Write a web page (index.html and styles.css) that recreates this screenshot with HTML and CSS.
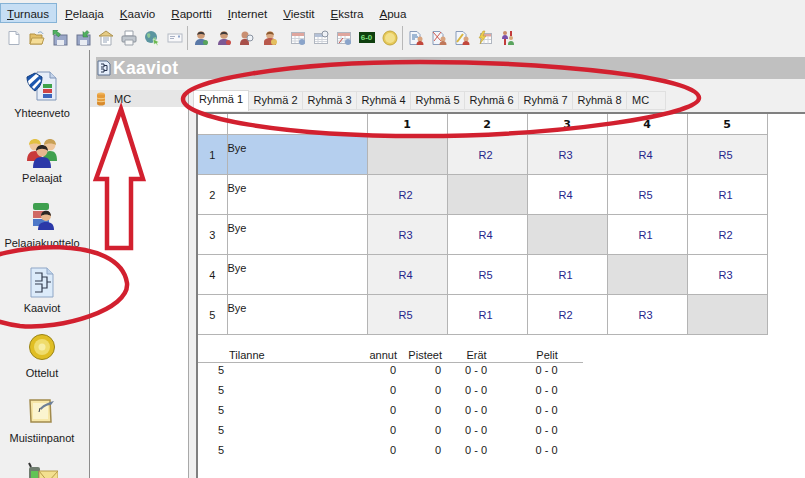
FILE: index.html
```html
<!DOCTYPE html>
<html lang="fi">
<head>
<meta charset="utf-8">
<title>Kaaviot</title>
<link rel="stylesheet" href="styles.css">
</head>
<body>
<svg class="defs" width="0" height="0" aria-hidden="true">
  <defs>
    <symbol id="i-page" viewBox="0 0 16 16"><path d="M3 1.500h7l3 3v10H3z" fill="#fff" stroke="#a9b2c0"/><path d="M10 1.500v3h3" fill="#e4e9f1" stroke="#a9b2c0"/></symbol>
    <symbol id="i-open" viewBox="0 0 16 16"><path d="M1 4h5l1 1h6v9H1z" fill="#e2bf68" stroke="#b39244"/><path d="M3 8h12l-2 6H1z" fill="#f5dd97" stroke="#b89a4e"/><path d="M9 3c2-2 4-1 5 1" fill="none" stroke="#7ea4c8"/></symbol>
    <symbol id="i-savein" viewBox="0 0 16 16"><rect x="2" y="5" width="13" height="10" fill="#9aa7c8" stroke="#6a7590"/><rect x="5" y="10" width="7" height="5" fill="#e9ecf2"/><path d="M1 0h5L4.800 1.500 8.500 4 6.500 7 3 3.500 1 5z" fill="#4fb060" stroke="#2d7a3f" stroke-width=".5"/></symbol>
    <symbol id="i-saveout" viewBox="0 0 16 16"><rect x="2" y="5" width="13" height="10" fill="#9aa7c8" stroke="#6a7590"/><rect x="5" y="10" width="7" height="5" fill="#e9ecf2"/><path d="M8 7V1.500l1.500 1.500L12 .500l2 2-2.500 2.500L13 7z" fill="#4fb060" stroke="#2d7a3f" stroke-width=".5"/></symbol>
    <symbol id="i-props" viewBox="0 0 16 16"><path d="M3 5h10v10H3z" fill="#fff" stroke="#a5acb6"/><path d="M1 6l7-5 7 5z" fill="#e5cb84" stroke="#ad9350"/><path d="M5 8h6M5 10h6M5 12h4" stroke="#96a4b8"/></symbol>
    <symbol id="i-print" viewBox="0 0 16 16"><path d="M4 1h8v5H4z" fill="#fff" stroke="#9aa1aa"/><rect x="1" y="6" width="14" height="6" rx="1" fill="#c1c7ce" stroke="#8a919a"/><path d="M4 10h8v5H4z" fill="#f6f6f6" stroke="#9aa1aa"/></symbol>
    <symbol id="i-web" viewBox="0 0 16 16"><circle cx="7" cy="7" r="6" fill="#5b95a0"/><path d="M3 4c3-2 4 1 3 3S3 8 3 4zM9 8l3-1 0 3-3 2z" fill="#8cc896"/><path d="M9 9l6 3-2 1 1 2-1 .5-1-2-2 1z" fill="#6bb84f" stroke="#fff" stroke-width=".5"/></symbol>
    <symbol id="i-mail" viewBox="0 0 16 16"><rect x="1" y="4" width="14" height="8" fill="#f8f8fa" stroke="#b4bac4"/><path d="M3 6.500h5M3 8.500h4" stroke="#a9b1c4"/><rect x="11" y="5.500" width="2" height="2" fill="#8fa6cc"/></symbol>
    <symbol id="i-person" viewBox="0 0 16 16"><circle cx="8" cy="5" r="3.800" fill="#cf9c78"/><path d="M4.200 5c0-4.500 7.600-4.500 7.600 0-2-1.500-5.600-1.500-7.600 0z" fill="#3f3a3a"/><path d="M2 15c0-5 3-6 6-6s6 1 6 6z" fill="#5a79a8"/><circle cx="12.500" cy="12.500" r="2.500" fill="#58a55c"/></symbol>
    <symbol id="i-person2" viewBox="0 0 16 16"><circle cx="8" cy="5" r="3.800" fill="#cf9c78"/><path d="M4.200 5c0-4.500 7.600-4.500 7.600 0-2-1.500-5.600-1.500-7.600 0z" fill="#3f3a3a"/><path d="M2 15c0-5 3-6 6-6s6 1 6 6z" fill="#7d5a96"/><circle cx="12.500" cy="12.500" r="2.500" fill="#c8504a"/></symbol>
    <symbol id="i-search" viewBox="0 0 16 16"><circle cx="6" cy="5" r="3.500" fill="#c98f72"/><path d="M1 15c0-5 2-6 5-6s4 1 4 6z" fill="#a8504a"/><circle cx="11" cy="8" r="3" fill="#eef2f7" stroke="#8a93a0"/></symbol>
    <symbol id="i-group" viewBox="0 0 16 16"><circle cx="8" cy="5" r="3.800" fill="#dba982"/><path d="M4.200 5c0-4.500 7.600-4.500 7.600 0-2-1.500-5.600-1.500-7.600 0z" fill="#8a5a30"/><path d="M2 12c0-3 3-4 6-4s6 1 6 4v3H2z" fill="#b9594c"/><circle cx="12" cy="12" r="3" fill="#e3bf5f"/></symbol>
    <symbol id="i-cal" viewBox="0 0 16 16"><rect x="1.500" y="2.500" width="13" height="11" fill="#fdfdfd" stroke="#b0b6c0"/><rect x="2" y="3" width="12" height="3" fill="#dfa69e"/><path d="M5 6v7M9 6v7M2 8.500h12M2 11h12" stroke="#d0d4db"/><circle cx="12" cy="12" r="3" fill="#8aa4ca"/></symbol>
    <symbol id="i-cal2" viewBox="0 0 16 16"><rect x="1.500" y="3.500" width="13" height="10" fill="#fdfdfd" stroke="#b0b6c0"/><rect x="2" y="4" width="12" height="3" fill="#b3c0d6"/><path d="M5 7v6M9 7v6M2 9.500h12M2 11.500h12" stroke="#d0d4db"/><circle cx="12" cy="4" r="3" fill="#eef1f6" stroke="#8a93a0"/></symbol>
    <symbol id="i-cal3" viewBox="0 0 16 16"><rect x="1.500" y="2.500" width="13" height="11" fill="#fdfdfd" stroke="#b0b6c0"/><rect x="2" y="3" width="12" height="3" fill="#dfa69e"/><path d="M5 6v7M9 6v7M2 8.500h12M2 11h12" stroke="#d0d4db"/><path d="M3 13l4-5" stroke="#c9504a"/><circle cx="12" cy="12" r="3" fill="#8aa4ca"/></symbol>
    <symbol id="i-ball" viewBox="0 0 16 16"><circle cx="8" cy="8" r="7" fill="#e6c95a" stroke="#c4a83e"/><circle cx="8" cy="8" r="5" fill="#f2e08a"/></symbol>
    <symbol id="i-rep" viewBox="0 0 16 16"><path d="M2 1.500h7l3 3v10H2z" fill="#f3f6fb" stroke="#8a9cba"/><path d="M4 5h5M4 7h6M4 9h3" stroke="#4a79ad"/><circle cx="12" cy="9" r="2.500" fill="#d9a47e"/><path d="M8.500 15c0-3 1.500-4 3.500-4s3.500 1 3.500 4z" fill="#c2473c"/></symbol>
    <symbol id="i-rep2" viewBox="0 0 16 16"><path d="M2 1.500h7l3 3v10H2z" fill="#f3f6fb" stroke="#8a9cba"/><path d="M2 2l8 9M10 2l-7 9" stroke="#d05a50"/><circle cx="12" cy="9" r="2.500" fill="#d9a47e"/><path d="M8.500 15c0-3 1.500-4 3.500-4s3.500 1 3.500 4z" fill="#c0785a"/></symbol>
    <symbol id="i-rep3" viewBox="0 0 16 16"><path d="M2 1.500h7l3 3v10H2z" fill="#f3f6fb" stroke="#8a9cba"/><path d="M3 12L9 4" stroke="#d9b63f" stroke-width="2"/><circle cx="12" cy="9" r="2.500" fill="#d9a47e"/><path d="M8.500 15c0-3 1.500-4 3.500-4s3.500 1 3.500 4z" fill="#c2473c"/></symbol>
    <symbol id="i-rep4" viewBox="0 0 16 16"><rect x="3.500" y="3.500" width="11" height="10" fill="#fdfdfd" stroke="#b0b6c0"/><rect x="4" y="4" width="10" height="2.500" fill="#dfa69e"/><path d="M7 6.500v7M11 6.500v7M4 9.500h10" stroke="#d0d4db"/><path d="M6 1L2 8h3l-2 6 6-8H6l2-5z" fill="#edcf4f" stroke="#b4972c" stroke-width=".5"/></symbol>
    <symbol id="i-bars" viewBox="0 0 16 16"><circle cx="5" cy="3" r="2" fill="#c98b6a"/><path d="M2 9c0-3 1-4 3-4s3 1 3 4z" fill="#7a4da8"/><path d="M5 9v6" stroke="#c23b3b" stroke-width="2"/><circle cx="11" cy="8" r="2" fill="#d7a878"/><path d="M8 15c0-3 1-4 3-4s3 1 3 4z" fill="#5aa45e"/><path d="M11 1v5" stroke="#c23b3b" stroke-width="2"/></symbol>

    <symbol id="i-summary" viewBox="0 0 32 32"><path d="M11 1h13l6 6v22H11z" fill="#e6edf8" stroke="#7f95b8"/><path d="M24 1v6h6" fill="#c5d4ea" stroke="#7f95b8"/><rect x="17" y="13" width="9" height="4" fill="#3ea24a"/><rect x="17" y="18" width="9" height="4" fill="#d04545"/><rect x="17" y="23" width="9" height="4" fill="#3c66bd"/><path d="M1 6l8-4 7 4c0 7-3 11-7 14-4-3-8-7-8-14z" fill="#1b57b0" stroke="#123c7c"/><path d="M2 10L10 3l3 2L3 14z" fill="#fff"/><path d="M6 16l8-8 1 2-7 8z" fill="#fff"/></symbol>
    <symbol id="i-players" viewBox="0 0 32 32"><circle cx="9" cy="9" r="5.500" fill="#efc69c"/><path d="M3 9c0-8 12-8 12 0-3-2-9-2-12 0z" fill="#e3c042"/><path d="M1 25c0-7 3-10 8-10s7 3 7 10z" fill="#c93a3a"/><circle cx="24" cy="9" r="5.500" fill="#efc69c"/><path d="M18 9c0-8 12-8 12 0-3-2-9-2-12 0z" fill="#c8a055"/><path d="M17 25c0-7 2-10 7-10s7 3 7 10z" fill="#3fa04f"/><circle cx="16" cy="15" r="5.500" fill="#e7b78e"/><path d="M10 15c0-8 12-8 12 0-3-3-9-3-12 0z" fill="#2c2725"/><path d="M7 32c0-8 3-11 9-11s9 3 9 11z" fill="#2b38a8"/></symbol>
    <symbol id="i-list" viewBox="0 0 32 32"><rect x="7" y="2" width="16" height="7" rx="2" fill="#3fa04f"/><rect x="7" y="10" width="16" height="7" fill="#d06a66"/><rect x="7" y="18" width="16" height="7" fill="#4d78c8"/><circle cx="20" cy="15" r="5" fill="#e7b78e"/><path d="M15 15c0-7 10-7 10 0-3-2-7-2-10 0z" fill="#2c2725"/><path d="M12 29c0-6 3-8 8-8s8 2 8 8z" fill="#2b38a8"/></symbol>
    <symbol id="i-draw" viewBox="0 0 32 32"><path d="M5 2h16l6 6v23H5z" fill="#dcebfa" stroke="#8fa6c6"/><path d="M21 2v6h6" fill="#c0d3ea" stroke="#8fa6c6"/><path d="M9 7h7v8H9M9 18h7v8H9M16 11h5v11h-5M21 16h4" fill="none" stroke="#333c4f" stroke-width="1.200"/></symbol>
    <symbol id="i-match" viewBox="0 0 32 32"><circle cx="16" cy="16" r="12.500" fill="#e0be24" stroke="#9a8416"/><circle cx="16" cy="16" r="8" fill="#efdc6c"/><circle cx="16" cy="16" r="3.500" fill="#f7eea6"/></symbol>
    <symbol id="i-notes" viewBox="0 0 32 32"><path d="M4 4h20l1 22H5z" fill="#f7e7a8" stroke="#a18a4c" stroke-width="1.500"/><path d="M7 7h15v16H7z" fill="#fbf4cf"/><path d="M14 12c4-4 9-6 14-7l-3 4c-3 0-6 1-10 5z" fill="#6d7f96"/><path d="M14 12l-1 4" stroke="#303a4a"/></symbol>
    <symbol id="i-msg" viewBox="0 0 32 32"><rect x="3" y="6" width="11" height="20" rx="2" fill="#6f7d6f"/><rect x="5" y="10" width="7" height="12" fill="#62c456"/><path d="M3 2l2 4" stroke="#333" stroke-width="2"/><path d="M13 10h19v22H13z" fill="#f3e08f" stroke="#b89b4a"/><path d="M13 10l9 11 10-11" fill="none" stroke="#b89b4a"/></symbol>
    <symbol id="i-db" viewBox="0 0 16 16"><ellipse cx="8" cy="3.500" rx="4" ry="2" fill="#f0b45a"/><rect x="4" y="3.500" width="8" height="9" fill="#e59b3a"/><ellipse cx="8" cy="12.500" rx="4" ry="2" fill="#d88a2c"/><path d="M4 7c2 1 6 1 8 0M4 10c2 1 6 1 8 0" stroke="#f7d28f" fill="none"/></symbol>
    <symbol id="i-title" viewBox="0 0 16 16"><path d="M2 1h9l3 3v11H2z" fill="#e5eefb" stroke="#5e7391"/><path d="M5 4h3v3H5M5 9h3v3H5M8 5.500h3v5H8" fill="none" stroke="#27334d"/></symbol>
  </defs>
</svg>

<div class="app">
  <nav class="menubar">
    <span class="menu-item is-active"><u>T</u>urnaus</span>
    <span class="menu-item"><u>P</u>elaaja</span>
    <span class="menu-item"><u>K</u>aavio</span>
    <span class="menu-item"><u>R</u>aportti</span>
    <span class="menu-item"><u>I</u>nternet</span>
    <span class="menu-item"><u>V</u>iestit</span>
    <span class="menu-item"><u>E</u>kstra</span>
    <span class="menu-item"><u>A</u>pua</span>
  </nav>

  <div class="toolbar">
    <span class="tool"><svg class="ico16"><use href="#i-page"/></svg></span>
    <span class="tool"><svg class="ico16"><use href="#i-open"/></svg></span>
    <span class="tool"><svg class="ico16"><use href="#i-savein"/></svg></span>
    <span class="tool"><svg class="ico16"><use href="#i-saveout"/></svg></span>
    <span class="tool"><svg class="ico16"><use href="#i-props"/></svg></span>
    <span class="tool"><svg class="ico16"><use href="#i-print"/></svg></span>
    <span class="tool"><svg class="ico16"><use href="#i-web"/></svg></span>
    <span class="tool"><svg class="ico16"><use href="#i-mail"/></svg></span>
    <span class="tool-sep"></span>
    <span class="tool"><svg class="ico16"><use href="#i-person"/></svg></span>
    <span class="tool"><svg class="ico16"><use href="#i-person2"/></svg></span>
    <span class="tool"><svg class="ico16"><use href="#i-search"/></svg></span>
    <span class="tool"><svg class="ico16"><use href="#i-group"/></svg></span>
    <span class="tool tool-gap"><svg class="ico16"><use href="#i-cal"/></svg></span>
    <span class="tool"><svg class="ico16"><use href="#i-cal2"/></svg></span>
    <span class="tool"><svg class="ico16"><use href="#i-cal3"/></svg></span>
    <span class="tool"><span class="score">6-0</span></span>
    <span class="tool"><svg class="ico16"><use href="#i-ball"/></svg></span>
    <span class="tool-sep"></span>
    <span class="tool"><svg class="ico16"><use href="#i-rep"/></svg></span>
    <span class="tool"><svg class="ico16"><use href="#i-rep2"/></svg></span>
    <span class="tool"><svg class="ico16"><use href="#i-rep3"/></svg></span>
    <span class="tool"><svg class="ico16"><use href="#i-rep4"/></svg></span>
    <span class="tool"><svg class="ico16"><use href="#i-bars"/></svg></span>
  </div>

  <div class="workspace">
    <aside class="sidebar">
      <div class="side-item"><svg class="ico32"><use href="#i-summary"/></svg><span>Yhteenveto</span></div>
      <div class="side-item"><svg class="ico32"><use href="#i-players"/></svg><span>Pelaajat</span></div>
      <div class="side-item"><svg class="ico32"><use href="#i-list"/></svg><span>Pelaajakuottelo</span></div>
      <div class="side-item"><svg class="ico32"><use href="#i-draw"/></svg><span>Kaaviot</span></div>
      <div class="side-item"><svg class="ico32"><use href="#i-match"/></svg><span>Ottelut</span></div>
      <div class="side-item"><svg class="ico32"><use href="#i-notes"/></svg><span>Muistiinpanot</span></div>
      <div class="side-item"><svg class="ico32"><use href="#i-msg"/></svg></div>
    </aside>

    <main class="content">
      <header class="titlebar"><svg class="ico16"><use href="#i-title"/></svg><h1>Kaaviot</h1></header>
      <div class="panes">
        <section class="tree">
          <div class="tree-row"><svg class="ico16"><use href="#i-db"/></svg><span>MC</span></div>
        </section>
        <section class="draws">
          <div class="tabs">
            <span class="tab is-active">Ryhmä 1</span>
            <span class="tab">Ryhmä 2</span>
            <span class="tab">Ryhmä 3</span>
            <span class="tab">Ryhmä 4</span>
            <span class="tab">Ryhmä 5</span>
            <span class="tab">Ryhmä 6</span>
            <span class="tab">Ryhmä 7</span>
            <span class="tab">Ryhmä 8</span>
            <span class="tab tab-mc">MC</span>
          </div>
          <div class="sheet">
            <table class="grid">
              <colgroup><col class="c-num"><col class="c-name"><col class="c-r"><col class="c-r"><col class="c-r"><col class="c-r"><col class="c-r"></colgroup>
              <thead>
                <tr><th></th><th></th><th>1</th><th>2</th><th>3</th><th>4</th><th>5</th></tr>
              </thead>
              <tbody>
                <tr><td class="num sel">1</td><td class="name sel">Bye</td><td class="diag"></td><td class="r alt">R2</td><td class="r alt">R3</td><td class="r alt">R4</td><td class="r alt">R5</td></tr>
                <tr><td class="num">2</td><td class="name">Bye</td><td class="r alt">R2</td><td class="diag"></td><td class="r">R4</td><td class="r">R5</td><td class="r">R1</td></tr>
                <tr><td class="num">3</td><td class="name">Bye</td><td class="r alt">R3</td><td class="r">R4</td><td class="diag"></td><td class="r">R1</td><td class="r">R2</td></tr>
                <tr><td class="num">4</td><td class="name">Bye</td><td class="r alt">R4</td><td class="r">R5</td><td class="r">R1</td><td class="diag"></td><td class="r">R3</td></tr>
                <tr><td class="num">5</td><td class="name">Bye</td><td class="r alt">R5</td><td class="r">R1</td><td class="r">R2</td><td class="r">R3</td><td class="diag"></td></tr>
              </tbody>
            </table>

            <div class="standings">
              <div class="st-row st-head"><span></span><span class="st-name">Tilanne</span><span class="st-right">annut</span><span class="st-right">Pisteet</span><span class="st-mid">Erät</span><span class="st-mid">Pelit</span></div>
              <div class="st-row st-body"><span class="st-right">5</span><span></span><span class="st-right">0</span><span class="st-right">0</span><span class="st-mid">0 - 0</span><span class="st-mid">0 - 0</span></div>
              <div class="st-row st-body"><span class="st-right">5</span><span></span><span class="st-right">0</span><span class="st-right">0</span><span class="st-mid">0 - 0</span><span class="st-mid">0 - 0</span></div>
              <div class="st-row st-body"><span class="st-right">5</span><span></span><span class="st-right">0</span><span class="st-right">0</span><span class="st-mid">0 - 0</span><span class="st-mid">0 - 0</span></div>
              <div class="st-row st-body"><span class="st-right">5</span><span></span><span class="st-right">0</span><span class="st-right">0</span><span class="st-mid">0 - 0</span><span class="st-mid">0 - 0</span></div>
              <div class="st-row st-body"><span class="st-right">5</span><span></span><span class="st-right">0</span><span class="st-right">0</span><span class="st-mid">0 - 0</span><span class="st-mid">0 - 0</span></div>
            </div>
          </div>
        </section>
      </div>
    </main>
  </div>

  <svg class="marks" viewBox="0 0 805 478" aria-hidden="true">
    <path d="M183 99C183 80 290 62 420 62C560 62 699 78 699 98C699 115 560 136 420 136C280 136 183 118 183 99Z"/>
    <path d="M121 109L143 179H131V248H107V179H96Z"/>
    <path d="M-40 270C10 240 120 235 127 283C130 310 60 330 20 326C-10 322 -30 310 -40 300"/>
  </svg>
</div>
</body>
</html>
```

FILE: styles.css
```css
* { box-sizing: border-box; }
html, body { margin: 0; padding: 0; }
body {
  width: 805px;
  height: 478px;
  overflow: hidden;
  background: #f0f0f0;
  font-family: "Liberation Sans", Arial, sans-serif;
  font-size: 11px;
  color: #1a1a1a;
}
.defs { position: absolute; }
.app {
  position: relative;
  width: 805px;
  height: 478px;
  overflow: hidden;
  display: flex;
  flex-direction: column;
}
.ico16 { width: 16px; height: 16px; display: block; flex: none; }
.ico32 { width: 32px; height: 32px; display: block; flex: none; }

.menubar {
  display: flex;
  height: 25px;
  padding-top: 3px;
  align-items: flex-start;
  font-size: 11.6px;
}
.menu-item {
  height: 20px;
  line-height: 19px;
  padding: 0 6.5px;
  margin-right: 1px;
  border: 1px solid transparent;
}
.menu-item.is-active {
  background: #c6def4;
  border-color: #86b3d6;
  padding-left: 6px;
}

.toolbar {
  display: flex;
  align-items: center;
  height: 25px;
  padding-left: 2px;
}
.tool {
  width: 23px;
  height: 22px;
  display: flex;
  align-items: center;
  justify-content: center;
  flex: none;
}
.tool-gap { margin-left: 5px; }
.tool-sep {
  width: 1px;
  height: 24px;
  background: #b8b8b8;
  margin: 0 1px 0 1px;
  flex: none;
}
.score {
  display: block;
  width: 16px;
  height: 11px;
  line-height: 11px;
  background: #0f3f0f;
  color: #7ee07e;
  font-size: 8px;
  font-weight: 700;
  text-align: center;
}

.workspace { flex: 1; display: flex; min-height: 0; }
.sidebar {
  width: 90px;
  flex: none;
  padding: 21px 5px 0 0;
  border-right: 1px solid #8c8c8c;
  overflow: hidden;
}
.side-item {
  height: 65px;
  display: flex;
  flex-direction: column;
  align-items: center;
  gap: 3px;
  line-height: 14px;
  white-space: nowrap;
}

.content { flex: 1; min-width: 0; display: flex; flex-direction: column; }
.titlebar {
  height: 22px;
  margin: 7px 0 0 6px;
  background: #c0c0c0;
  display: flex;
  align-items: center;
  gap: 1px;
  flex: none;
}
.titlebar h1 {
  margin: 0;
  font-size: 17.5px;
  font-weight: 700;
  line-height: 22px;
  letter-spacing: .3px;
  color: #fff;
}

.panes { flex: 1; min-height: 0; display: flex; padding-top: 11px; }
.tree {
  width: 99px;
  flex: none;
  background: #fff;
  border-right: 1px solid #a8a8a8;
}
.tree-row {
  height: 17px;
  background: #e6e6e6;
  display: flex;
  align-items: center;
  gap: 5px;
  padding-left: 3px;
}

.draws { flex: 1; min-width: 0; display: flex; flex-direction: column; padding-left: 4px; }
.tabs { display: flex; height: 22px; flex: none; padding-top: 1px; }
.tab {
  width: 54px;
  height: 19px;
  line-height: 17px;
  text-align: center;
  border: 1px solid #e0e0e0;
  border-left: 0;
  flex: none;
  white-space: nowrap;
}
.tab.is-active {
  width: 56px;
  height: 21px;
  margin-top: -1px;
  background: #fff;
  border: 1px solid #d8d8d8;
  border-bottom: 0;
}
.tab-mc { width: 39px; text-align: left; padding-left: 5px; }

.sheet {
  flex: 1;
  min-height: 0;
  margin-left: 3px;
  background: #fff;
  border-top: 2px solid #808080;
  border-left: 2px solid #808080;
}
.grid {
  border-collapse: collapse;
  table-layout: fixed;
  width: 569px;
}
.c-num { width: 29px; }
.c-name { width: 140px; }
.c-r { width: 80px; }
.grid th, .grid td { border: 1px solid #b4b4b4; padding: 0; }
.grid thead tr { height: 20px; }
.grid th {
  font-family: "DejaVu Sans", sans-serif;
  font-size: 11px;
  font-weight: 700;
  color: #111;
  border-top: 0;
  padding-top: 1px;
}
.grid th:first-child, .grid td:first-child { border-left: 0; }
.grid tbody tr { height: 40px; }
.grid td { text-align: center; padding-top: 2px; }
.grid .name { text-align: left; vertical-align: top; padding-top: 7px; }
.grid .r { color: #26268c; padding-right: 3px; }
.grid .alt { background: #f0f0f0; }
.grid .diag { background: #e0e0e0; }
.grid .sel { background: #b5cfee; }

.standings { margin-top: 14px; width: 385px; }
.st-row {
  display: grid;
  grid-template-columns: 26px 130px 43px 45px 69px 72px;
  height: 20px;
  line-height: 14px;
}
.st-head {
  height: 14px;
  line-height: 13px;
  border-bottom: 1px solid #b4b4b4;
}
.st-body { padding-right: 1px; grid-template-columns: 26px 129px 43px 45px 70px 71px; }
.st-name { padding-left: 5px; }
.st-right { text-align: right; }
.st-mid { text-align: center; }

.marks {
  position: absolute;
  left: 0;
  top: 0;
  width: 805px;
  height: 478px;
  pointer-events: none;
  fill: none;
  stroke: #d2202f;
  stroke-width: 4.5;
}
```
